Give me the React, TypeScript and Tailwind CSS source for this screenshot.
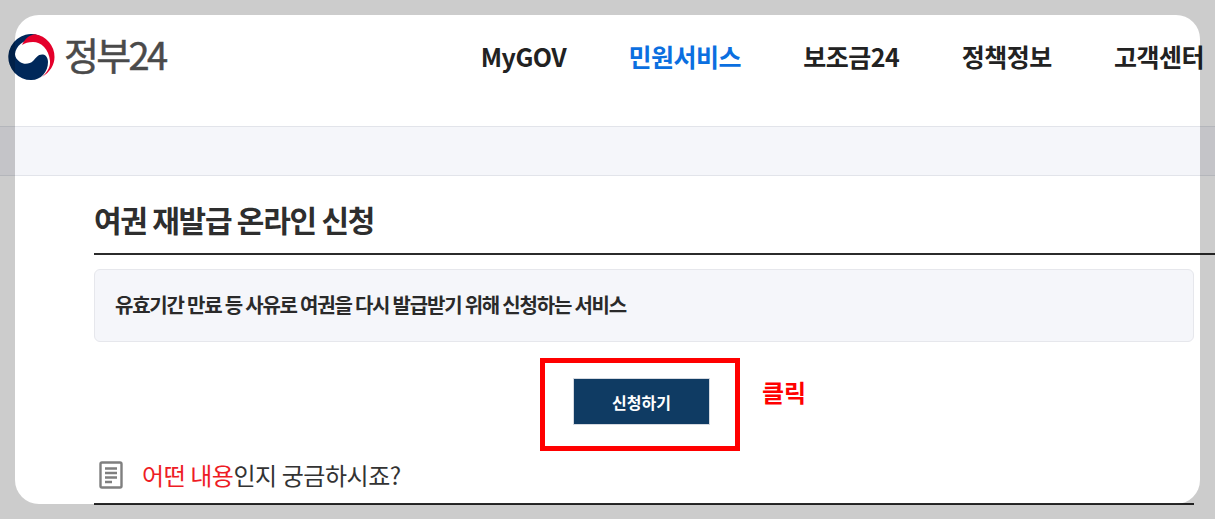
const FONT = "font-['Noto_Sans_CJK_KR','Noto_Sans',sans-serif]";

const NAV_ITEMS = [
  { label: "MyGOV", active: false },
  { label: "민원서비스", active: true },
  { label: "보조금24", active: false },
  { label: "정책정보", active: false },
  { label: "고객센터", active: false },
];

function Logo() {
  return (
    <svg width="48" height="46" viewBox="0 0 48 46" className="shrink-0">
      <path
        d="M27 .3A23 23 0 1 0 23.5 46C33 46 40 38 40 28C40 24 38 21 35 20.5C30 20 28 24 25 27C22 30 16 31 12 28C9 26 7 23 7 20C8 12 15 6 24 5.5L32 2Z"
        fill="#00285a"
      />
      <path
        d="M27 .3A23 23 0 0 1 46.5 23C46.5 31 42 38 34 43C40 38 42.5 32 42 27C41 15 33 8 25 8C20 8 17 9 14 11C17 5 21 1 27 .3Z"
        fill="#e4002b"
      />
    </svg>
  );
}

function DocIcon() {
  return (
    <svg width="24" height="28" viewBox="0 0 24 28" fill="none" stroke="#7f7f7f" strokeWidth="2.4" className="shrink-0">
      <rect x="1.5" y="1.5" width="21" height="25" rx="1.5" />
      <path d="M6 7.5h12M6 12h12M6 16.5h12M6 21h7" />
    </svg>
  );
}

export default function App() {
  return (
    <div className={`relative h-[519px] w-[1215px] overflow-hidden bg-white ${FONT}`}>
      <header className="flex h-[126px] items-start justify-between pl-2 pr-[11px]">
        <div className="flex items-start gap-2 pt-[34px]">
          <Logo />
          <span className="-mt-[3px] text-[38px] leading-[46px] tracking-[-2.7px] text-[#4a4a4a] [-webkit-text-stroke:0.5px_#4a4a4a]">
            정부24
          </span>
        </div>
        <nav className="flex gap-[62.3px] pt-[37px]">
          {NAV_ITEMS.map((item) => (
            <span
              key={item.label}
              className={`text-[25px] leading-[38px] font-bold tracking-[-0.5px] ${
                item.active ? "text-[#0b6fe0]" : "text-[#222222]"
              }`}
            >
              {item.label}
            </span>
          ))}
        </nav>
      </header>

      <div className="h-[50px] border-y border-[#e2e4ea] bg-[#f5f6fa]" />

      <main className="pl-[94px]">
        <h1 className="h-[79px] border-b-2 border-[#2b2b2b] pt-[22px] text-[30px] leading-[42px] font-bold tracking-[-1.25px] text-[#2e2e2e]">
          여권 재발급 온라인 신청
        </h1>

        <div className="mt-[14px] flex h-[73px] w-[1100px] items-center rounded-md border border-[#e6e7ec] bg-[#f5f6fa] pb-[2px] pl-[20px] text-[20px] font-bold tracking-[-1.22px] text-[#2a2a2a]">
          유효기간 만료 등 사유로 여권을 다시 발급받기 위해 신청하는 서비스
        </div>

        <div className="mt-[16px] flex h-[93px] w-[1100px] items-center pl-[446px]">
          <div className="h-[93px] w-[200px] border-[5px] border-[#ff0000] pt-[15px] pl-[28px]">
            <button
              type="button"
              className="h-[47px] w-[137px] border border-[#d5d9e0] bg-[#0f3b63] text-[16px] font-bold text-white"
            >
              신청하기
            </button>
          </div>
          <span className="mb-[26px] ml-[22px] text-[24px] leading-[30px] font-bold text-[#ff0000]">클릭</span>
        </div>

        <div className="mt-[10px] flex h-[44px] w-[1100px] items-center border-b-2 border-[#2b2b2b] pb-[14px] pl-[5px]">
          <DocIcon />
          <p className="ml-[19px] text-[24px] leading-[32px] tracking-[-0.45px] text-[#333333]">
            <span className="text-[#ee1c25]">어떤 내용</span>인지 궁금하시죠?
          </p>
        </div>
      </main>

      {/* dimmed screen around the highlighted area */}
      <div className="pointer-events-none absolute top-[15px] left-[15px] h-[489px] w-[1185px] rounded-[24px] shadow-[0_0_0_9999px_rgba(0,0,0,0.2)]" />
    </div>
  );
}
